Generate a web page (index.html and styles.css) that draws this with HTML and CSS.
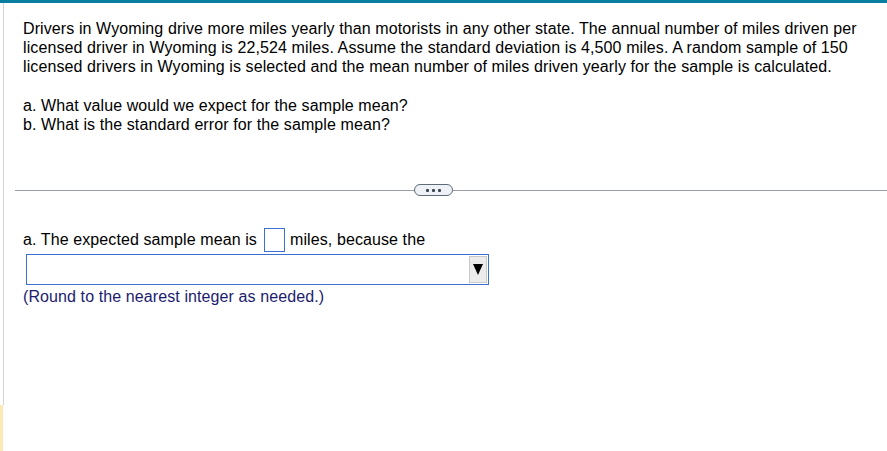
FILE: index.html
```html
<!DOCTYPE html>
<html>
<head>
<meta charset="utf-8">
<link rel="stylesheet" href="styles.css">
</head>
<body>
<div class="topbar"></div>
<div class="page">
  <div class="side"><div class="side-gray"></div><div class="side-yellow"></div></div>
  <div class="main">
    <div class="question">
      <p class="intro">Drivers in Wyoming drive more miles yearly than motorists in any other state. The annual number of miles driven per licensed driver in Wyoming is 22,524 miles. Assume the standard deviation is 4,500 miles. A random sample of 150 licensed drivers in Wyoming is selected and the mean number of miles driven yearly for the sample is calculated.</p>
      <p class="parts">a. What value would we expect for the sample mean?<br>b. What is the standard error for the sample mean?</p>
    </div>
    <div class="divider">
      <span class="line left"></span>
      <span class="more"><i></i><i></i><i></i></span>
      <span class="line right"></span>
    </div>
    <div class="answer">
      <div class="row">a. The expected sample mean is <span class="box"></span> miles, because the</div>
      <div class="select"><span class="arrow"><svg width="10" height="11" viewBox="0 0 10 11"><path d="M0 0H10L5 11Z" fill="#000"/></svg></span></div>
      <div class="note">(Round to the nearest integer as needed.)</div>
    </div>
  </div>
</div>
</body>
</html>
```
FILE: styles.css
```css
html, body { margin: 0; padding: 0; background: #fff; }
body { font-family: "Liberation Sans", Arial, sans-serif; font-size: 16px; letter-spacing: 0.1px; color: #000; width: 887px; height: 451px; overflow: hidden; }
.topbar { height: 3px; background: #0a7ea0; }
.page { display: flex; height: 448px; }
.side { width: 4px; display: flex; flex-direction: column; flex: none; }
.side-gray { height: 402px; border-right: 1px solid #d4d4d4; width: 3px; }
.side-yellow { flex: 1; width: 3px; background: #fbeab6; }
.main { flex: 1; display: flex; flex-direction: column; }
.question { padding: 16px 0 0 19px; line-height: 19px; }
.question p { margin: 0; }
.intro { width: 860px; }
.parts { margin-top: 20px !important; }
.divider { display: flex; align-items: center; margin: 50px 0 0 11px; }
.line { height: 1px; background: #9a9fa5; }
.line.left { width: 399px; flex: none; }
.line.right { flex: 1; }
.more { flex: none; width: 37px; height: 10px; border: 1px solid #5d6b78; border-radius: 6px; background: #eef2f6; display: flex; align-items: center; justify-content: center; gap: 3px; }
.more i { width: 3px; height: 3px; background: #3d4650; border-radius: 1px; display: block; }
.answer { padding: 32px 0 0 19px; }
.row { line-height: 24px; display: flex; align-items: center; }
.box { display: inline-block; width: 19px; height: 22px; border: 1px solid #3b6fd1; margin: 0 5px 0 7px; }
.select { margin: 2px 0 0 3px; width: 460px; height: 29px; border: 1px solid #3b6fd1; display: flex; align-items: center; justify-content: flex-end; padding-right: 1px; }
.arrow { width: 16px; height: 25px; background: #ececec; border: 1px solid #c9c9c9; display: flex; align-items: center; justify-content: center; }
.note { color: #1c1c6e; line-height: 19px; margin-top: 2px; }
```
